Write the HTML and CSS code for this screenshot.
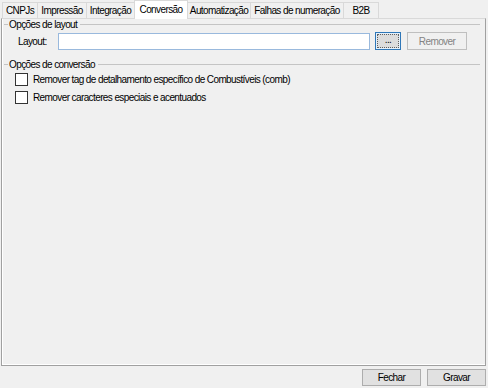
FILE: index.html
```html
<!DOCTYPE html>
<html lang="pt-BR">
<head>
    <meta charset="UTF-8">
    <title>Configurações</title>
    <link rel="stylesheet" href="styles.css">
</head>
<body>
<div class="window">
    <!-- Abas -->
    <div class="tabs">
        <div class="tab w36">CNPJs</div>
        <div class="tab w50">Impressão</div>
        <div class="tab w49">Integração</div>
        <div class="tab active w54">Conversão</div>
        <div class="tab w64">Automatização</div>
        <div class="tab w94">Falhas de numeração</div>
        <div class="tab w36">B2B</div>
    </div>

    <!-- Página da aba Conversão -->
    <div class="page">
        <div class="group">
            <div class="group-title"><span>Opções de layout</span></div>
            <div class="layout-row">
                <label class="field-label">Layout:</label>
                <input type="text" class="textbox">
                <button class="btn btn-default"><span class="focus">...</span></button>
                <button class="btn btn-disabled" disabled>Remover</button>
            </div>
        </div>

        <div class="group group-conv">
            <div class="group-title"><span>Opções de conversão</span></div>
            <label class="check"><span class="box"></span>Remover tag de detalhamento específico de Combustíveis (comb)</label>
            <label class="check"><span class="box"></span>Remover caracteres especiais e acentuados</label>
        </div>
    </div>

    <!-- Botões -->
    <div class="footer">
        <button class="btn btn-foot">Fechar</button>
        <button class="btn btn-foot">Gravar</button>
    </div>
</div>
</body>
</html>
```

FILE: styles.css
```css
body {
    margin: 0;
    background-color: #f0f0f0;
    font-family: "Liberation Sans", Arial, sans-serif;
    font-size: 10px;
    letter-spacing: -0.6px;
    color: #000;
}
.window {
    width: 488px;
    height: 388px;
    display: flex;
    flex-direction: column;
}

/* Abas */
.tabs {
    display: flex;
    align-items: flex-end;
    height: 18px;
    padding-left: 2px;
    position: relative;
    z-index: 2;
}
.tab {
    box-sizing: border-box;
    height: 16px;
    margin-left: -1px;
    border: 1px solid #d9d9d9;
    border-bottom: none;
    background-color: #f0f0f0;
    text-align: center;
    line-height: 15px;
    white-space: nowrap;
}
.tab:first-child {
    margin-left: 0;
}
.tab.active {
    height: 19px;
    margin-bottom: -1px;
    background-color: #fff;
    line-height: 17px;
    position: relative;
    z-index: 1;
}
.w36 { width: 36px; }
.w49 { width: 49px; }
.w50 { width: 50px; }
.w54 { width: 54px; }
.w64 { width: 64px; }
.w94 { width: 94px; }

/* Página */
.page {
    box-sizing: border-box;
    width: 485px;
    height: 348px;
    margin-left: 1px;
    padding: 0 5px 0 2px;
    border: 1px solid #a0a0a0;
    border-top-color: #d9d9d9;
    box-shadow: inset 1px 0 0 #fff, inset 0 -1px 0 #fff;
}
.group-title {
    display: flex;
    align-items: center;
    height: 11px;
}
.group-title::before,
.group-title::after {
    content: "";
    border-top: 1px solid #c4c4c4;
}
.group-title::before {
    width: 4px;
    margin-right: 1px;
}
.group-title::after {
    flex: 1;
    margin-left: 3px;
}
.layout-row {
    display: flex;
    align-items: center;
    height: 18px;
    margin-top: 2px;
}
.field-label {
    width: 40px;
    padding-left: 14px;
}
.textbox {
    box-sizing: border-box;
    width: 312px;
    height: 17px;
    margin: 0;
    border: 1px solid #99b9dd;
    background-color: #fff;
    outline: none;
}

/* Botões */
.btn {
    box-sizing: border-box;
    height: 18px;
    padding: 0;
    border: 1px solid #adadad;
    background-color: #e1e1e1;
    font-family: inherit;
    font-size: 10px;
    letter-spacing: inherit;
    color: #000;
}
.btn-default {
    width: 26px;
    margin-left: 5px;
    padding: 1px;
    border-color: #2f77b8;
    background-color: #e5f1fb;
    display: flex;
}
.btn-default .focus {
    flex: 1;
    border: 1px dotted #606060;
    line-height: 10px;
    background-color: #dcdcdc;
}
.btn-disabled {
    width: 60px;
    margin-left: 6px;
    border-color: #bfbfbf;
    background-color: #f0f0f0;
    color: #838383;
}
.group-conv {
    margin-top: 9px;
}
.check {
    display: flex;
    align-items: center;
    height: 13px;
    margin: 3px 0 0 11px;
}
.check + .check {
    margin-top: 5px;
}
.box {
    box-sizing: border-box;
    width: 13px;
    height: 13px;
    margin-right: 5px;
    border: 1px solid #333;
    background-color: #fff;
}
.footer {
    display: flex;
    justify-content: flex-end;
    gap: 6px;
    padding: 3px 2px 0 0;
}
.btn-foot {
    width: 59px;
    height: 17px;
}
```
